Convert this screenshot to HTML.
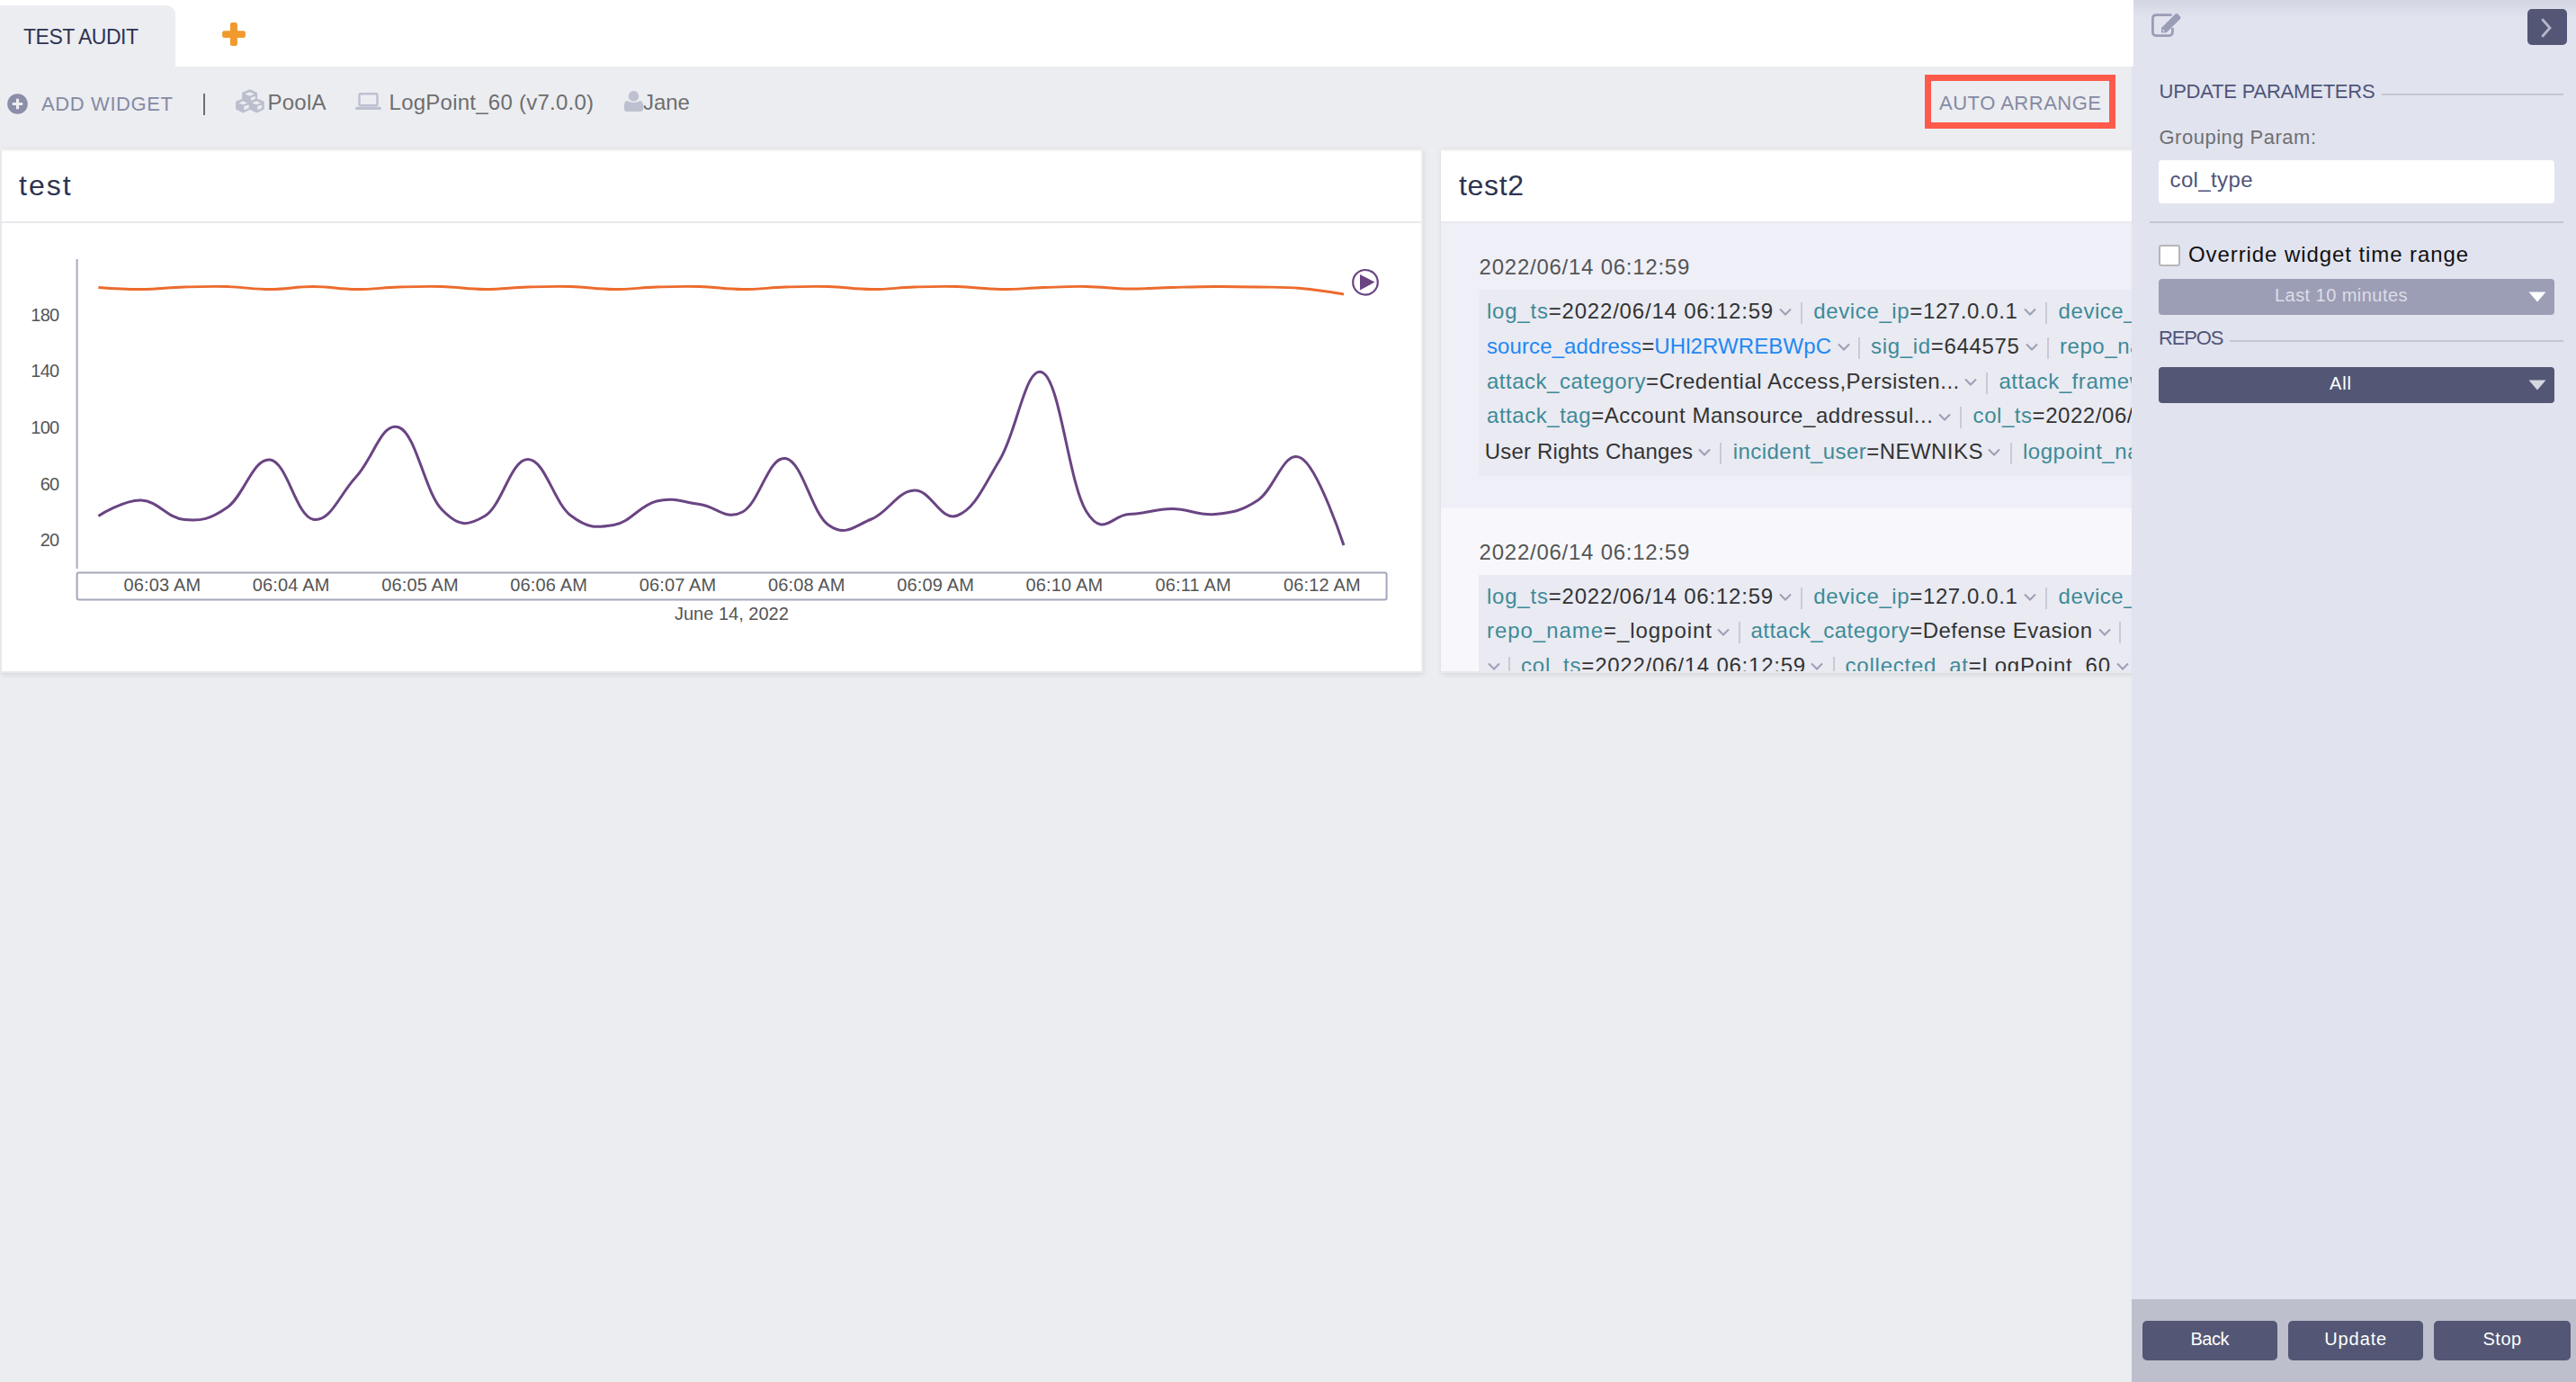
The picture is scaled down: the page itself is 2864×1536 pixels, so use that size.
<!DOCTYPE html>
<html><head><meta charset="utf-8"><title>Dashboard</title>
<style>
html,body{margin:0;padding:0}
body{width:2864px;height:1536px;overflow:hidden;position:relative;background:#ECEDF1;font-family:"Liberation Sans",sans-serif}
.r{position:absolute;box-sizing:content-box}
.t{position:absolute;white-space:nowrap}
</style></head><body>
<div class="r" style="left:0px;top:0px;width:2372px;height:74px;background:#ffffff;"></div>
<div class="r" style="left:0px;top:6px;width:195px;height:68px;background:#ECEDF1;border-top-right-radius:10px"></div>
<div class="t" style="left:26.0px;top:30.0px;font-size:23px;line-height:23px;color:#2E3350;letter-spacing:-0.50px;font-weight:normal;">TEST AUDIT</div>
<svg class="r" style="left:240px;top:18px" width="40" height="40" viewBox="240 18 40 40"><rect x="255.9" y="25.1" width="8" height="25.8" rx="2.2" fill="#F09A2D"/><rect x="247.1" y="34.3" width="25.8" height="7.6" rx="2.2" fill="#F09A2D"/></svg>
<svg class="r" style="left:8px;top:104px" width="23" height="23" viewBox="0 0 23 23"><circle cx="11.5" cy="11.5" r="11.3" fill="#8A8EA8"/><path d="M11.5 5.8 V17.2 M5.8 11.5 H17.2" stroke="#EDEEF2" stroke-width="3.2"/></svg>
<div class="t" style="left:46.0px;top:104.7px;font-size:22px;line-height:22px;color:#858AA3;letter-spacing:0.61px;font-weight:normal;">ADD WIDGET</div>
<div class="r" style="left:226px;top:104px;width:2px;height:24px;background:#6E6E73;"></div>
<svg class="r" style="left:258px;top:96px" width="40" height="34" viewBox="258 96 40 34">
<g fill="#BBBECC">
<path d="M269.1 102.9 L277.7 99.2 L286 102.9 L286 111 L277.7 114.5 L269.1 111 Z"/>
<path d="M262.1 112.7 L270.3 109.6 L278.6 112.7 L278.6 121.6 L270.3 125.6 L262.1 121.6 Z"/>
<path d="M277.3 112.7 L285.4 109.6 L293.7 112.7 L293.7 121.6 L285.4 125.6 L277.3 121.6 Z"/>
</g>
<g fill="#ECEDF1">
<path d="M272.3 104.6 L277.7 102.3 L282.8 104.6 L277.7 106.7 Z"/>
<path d="M278.9 108.4 L283.8 106.8 L283.8 109.9 L278.9 111.8 Z"/>
<path d="M265.4 114.5 L270.3 112.2 L275 114.5 L270.3 116.3 Z"/>
<path d="M271.3 118.1 L276.7 116.6 L276.7 120.1 L271.3 122.6 Z"/>
<path d="M280.1 114.5 L285.1 112.2 L290 114.5 L285.1 116.3 Z"/>
<path d="M286.3 118.1 L291.1 116.6 L291.1 120.1 L286.3 122.6 Z"/>
</g></svg>
<div class="t" style="left:297.5px;top:101.9px;font-size:24px;line-height:24px;color:#6E6E6E;letter-spacing:0.24px;font-weight:normal;">PoolA</div>
<svg class="r" style="left:395px;top:103px" width="29" height="20" viewBox="0 0 29 20">
<rect x="4.5" y="1.2" width="20" height="13" rx="1.5" fill="none" stroke="#BDC0CF" stroke-width="2.4"/>
<rect x="0" y="15.8" width="29" height="3.2" rx="1.6" fill="#BDC0CF"/></svg>
<div class="t" style="left:432.6px;top:101.9px;font-size:24px;line-height:24px;color:#6E6E6E;letter-spacing:0.24px;font-weight:normal;">LogPoint_60 (v7.0.0)</div>
<svg class="r" style="left:694px;top:101px" width="21" height="23" viewBox="0 0 21 23">
<circle cx="10.5" cy="5.8" r="5.8" fill="#BDC0CF"/>
<path d="M3 11 Q10.5 15 18 11 Q21 12 21 16 V20 Q21 23 18 23 H3 Q0 23 0 20 V16 Q0 12 3 11 Z" fill="#BDC0CF"/></svg>
<div class="t" style="left:715.0px;top:101.9px;font-size:24px;line-height:24px;color:#6E6E6E;letter-spacing:-0.08px;font-weight:normal;">Jane</div>
<div class="r" style="left:2140px;top:83px;width:198px;height:46px;border:7px solid #FE5A4B"></div>
<div class="t" style="left:2156.0px;top:104.4px;font-size:22px;line-height:22px;color:#858AA3;letter-spacing:0.51px;font-weight:normal;">AUTO ARRANGE</div>
<div class="r" style="left:0px;top:166px;width:1578px;height:578px;background:#fff;border-style:solid;border-width:2px;border-color:#F4F2F3 #EFEDED #EAE8E8 #E8E7EA;box-shadow:0 0 6px rgba(0,0,0,0.06),1px 3px 6px rgba(0,0,0,0.05)"></div>
<div class="r" style="left:2px;top:246px;width:1578px;height:2px;background:#E9E9EE;"></div>
<div class="t" style="left:21.0px;top:189.9px;font-size:32px;line-height:32px;color:#2E3350;letter-spacing:2.01px;font-weight:normal;">test</div>
<svg class="r" style="left:0;top:0" width="1600" height="760"><path d="M 109.4 319.5 C 109.4 319.5 138.0 321.6 157.1 321.5 C 176.2 321.4 185.8 319.6 204.9 319.0 C 224.0 318.4 233.5 318.0 252.6 318.5 C 271.7 319.0 281.3 321.5 300.4 321.5 C 319.5 321.5 329.0 318.5 348.1 318.5 C 367.2 318.5 376.8 321.4 395.9 321.5 C 415.0 321.6 424.5 319.6 443.6 319.0 C 462.7 318.4 472.3 318.0 491.4 318.5 C 510.5 319.0 520.0 321.4 539.1 321.5 C 558.2 321.6 567.8 319.6 586.8 319.0 C 605.9 318.4 615.5 318.0 634.6 318.5 C 653.7 319.0 663.2 321.4 682.3 321.5 C 701.4 321.6 711.0 319.6 730.1 319.0 C 749.2 318.4 758.7 318.0 777.8 318.5 C 796.9 319.0 806.5 321.4 825.6 321.5 C 844.7 321.6 854.2 319.6 873.3 319.0 C 892.4 318.4 902.0 318.0 921.1 318.5 C 940.2 319.0 949.7 321.4 968.8 321.5 C 987.9 321.6 997.5 319.6 1016.6 319.0 C 1035.6 318.4 1045.2 318.0 1064.3 318.5 C 1083.4 319.0 1092.9 321.3 1112.0 321.5 C 1131.1 321.7 1140.7 320.1 1159.8 319.5 C 1178.9 318.9 1188.4 318.2 1207.5 318.5 C 1226.6 318.8 1236.2 320.8 1255.3 321.0 C 1274.4 321.2 1283.9 320.0 1303.0 319.5 C 1322.1 319.0 1331.7 318.6 1350.8 318.5 C 1369.9 318.4 1379.4 318.6 1398.5 319.0 C 1417.6 319.4 1427.2 318.9 1446.3 320.5 C 1465.4 322.1 1494.0 327.0 1494.0 327.0" fill="none" stroke="#EC6B2D" stroke-width="2.8"/><path d="M 109.4 573.5 C 109.4 573.5 138.0 555.2 157.1 556.0 C 176.2 556.8 185.8 575.9 204.9 577.5 C 224.0 579.1 233.5 577.3 252.6 564.0 C 271.7 550.7 281.3 508.4 300.4 511.0 C 319.5 513.6 329.0 573.4 348.1 577.2 C 367.2 581.0 376.8 550.4 395.9 530.0 C 415.0 509.6 424.5 467.7 443.6 475.0 C 462.7 482.3 472.3 546.8 491.4 566.5 C 510.5 586.2 520.0 584.7 539.1 573.5 C 558.2 562.3 567.8 510.6 586.8 510.5 C 605.9 510.4 615.5 558.4 634.6 573.0 C 653.7 587.6 663.2 586.7 682.3 583.5 C 701.4 580.3 711.0 561.6 730.1 557.0 C 749.2 552.4 758.7 558.1 777.8 560.5 C 796.9 562.9 806.5 579.2 825.6 569.0 C 844.7 558.8 854.2 506.6 873.3 509.5 C 892.4 512.4 902.0 570.0 921.1 583.5 C 940.2 597.0 949.7 584.7 968.8 577.0 C 987.9 569.3 997.5 545.8 1016.6 545.0 C 1035.6 544.2 1045.2 580.0 1064.3 573.0 C 1083.4 566.0 1092.9 541.9 1112.0 510.2 C 1131.1 478.5 1140.7 402.9 1159.8 414.5 C 1178.9 426.1 1188.4 536.6 1207.5 568.0 C 1226.6 599.4 1236.2 572.0 1255.3 571.5 C 1274.4 571.0 1283.9 565.5 1303.0 565.5 C 1322.1 565.5 1331.7 573.4 1350.8 571.5 C 1369.9 569.6 1379.4 568.5 1398.5 556.0 C 1417.6 543.5 1427.2 499.0 1446.3 509.0 C 1465.4 519.0 1494.0 606.0 1494.0 606.0" fill="none" stroke="#6A4483" stroke-width="3"/><rect x="84.6" y="288" width="2" height="344" fill="#A8ABBE"/><rect x="85.6" y="636.6" width="1456" height="30" rx="2" fill="none" stroke="#A3A7BA" stroke-width="2"/><circle cx="1518" cy="313.8" r="13.8" fill="#fff" stroke="#6A4483" stroke-width="2.2"/><path d="M1512 305 L1528.5 313.6 L1512 322.5 Z" fill="#6A4483"/></svg>
<div class="t" style="left:0;width:65.5px;text-align:right;top:340.2px;font-size:20px;line-height:20px;color:#555;letter-spacing:-0.7px">180</div>
<div class="t" style="left:0;width:65.5px;text-align:right;top:402.4px;font-size:20px;line-height:20px;color:#555;letter-spacing:-0.7px">140</div>
<div class="t" style="left:0;width:65.5px;text-align:right;top:465.1px;font-size:20px;line-height:20px;color:#555;letter-spacing:-0.7px">100</div>
<div class="t" style="left:0;width:65.5px;text-align:right;top:527.7px;font-size:20px;line-height:20px;color:#555;letter-spacing:-0.7px">60</div>
<div class="t" style="left:0;width:65.5px;text-align:right;top:590.1px;font-size:20px;line-height:20px;color:#555;letter-spacing:-0.7px">20</div>
<div class="t" style="left:120.4px;width:120px;text-align:center;top:640.2px;font-size:20px;line-height:20px;color:#555;letter-spacing:0.15px">06:03 AM</div>
<div class="t" style="left:263.7px;width:120px;text-align:center;top:640.2px;font-size:20px;line-height:20px;color:#555;letter-spacing:0.15px">06:04 AM</div>
<div class="t" style="left:407.0px;width:120px;text-align:center;top:640.2px;font-size:20px;line-height:20px;color:#555;letter-spacing:0.15px">06:05 AM</div>
<div class="t" style="left:550.2px;width:120px;text-align:center;top:640.2px;font-size:20px;line-height:20px;color:#555;letter-spacing:0.15px">06:06 AM</div>
<div class="t" style="left:693.5px;width:120px;text-align:center;top:640.2px;font-size:20px;line-height:20px;color:#555;letter-spacing:0.15px">06:07 AM</div>
<div class="t" style="left:836.8px;width:120px;text-align:center;top:640.2px;font-size:20px;line-height:20px;color:#555;letter-spacing:0.15px">06:08 AM</div>
<div class="t" style="left:980.1px;width:120px;text-align:center;top:640.2px;font-size:20px;line-height:20px;color:#555;letter-spacing:0.15px">06:09 AM</div>
<div class="t" style="left:1123.4px;width:120px;text-align:center;top:640.2px;font-size:20px;line-height:20px;color:#555;letter-spacing:0.15px">06:10 AM</div>
<div class="t" style="left:1266.6px;width:120px;text-align:center;top:640.2px;font-size:20px;line-height:20px;color:#555;letter-spacing:0.15px">06:11 AM</div>
<div class="t" style="left:1409.9px;width:120px;text-align:center;top:640.2px;font-size:20px;line-height:20px;color:#555;letter-spacing:0.15px">06:12 AM</div>
<div class="t" style="left:733.4px;width:160px;text-align:center;top:671.6px;font-size:20px;line-height:20px;color:#555">June 14, 2022</div>
<div class="r" style="left:1602px;top:166px;width:772px;height:578px;background:#fff;border-style:solid;border-width:2px 2px 2px 0;border-color:#F4F2F3 #EFEDED #EAE8E8 #F2F1F4;box-shadow:0 0 6px rgba(0,0,0,0.06),1px 3px 6px rgba(0,0,0,0.05)"></div>
<div class="r" style="left:1602px;top:166px;width:770px;height:580px;overflow:hidden">
<div class="r" style="left:0px;top:2px;width:770px;height:78px;background:#ffffff;"></div>
<div class="r" style="left:0px;top:80px;width:770px;height:2px;background:#E9E9EE;"></div>
<div class="t" style="left:20.0px;top:23.9px;font-size:32px;line-height:32px;color:#2E3350;letter-spacing:0.66px;font-weight:normal;">test2</div>
<div class="r" style="left:0px;top:82px;width:770px;height:316.5px;background:#EFEFF7;"></div>
<div class="r" style="left:0px;top:398.5px;width:770px;height:181.5px;background:#F8F8FC;"></div>
<div class="t" style="left:42.6px;top:118.7px;font-size:24px;line-height:24px;color:#555;letter-spacing:0.75px;font-weight:normal;">2022/06/14 06:12:59</div>
<div class="r" style="left:42px;top:156px;width:728px;height:206.5px;background:#E9EAF2;"></div>
<div class="t" style="left:42.6px;top:435.5px;font-size:24px;line-height:24px;color:#555;letter-spacing:0.75px;font-weight:normal;">2022/06/14 06:12:59</div>
<div class="r" style="left:42px;top:473px;width:728px;height:107px;background:#E9EAF2;"></div>
<div class="t" style="left:50.9px;top:167.7px;font-size:24px;line-height:24px;letter-spacing:0.80px"><span style="color:#3E8A98">log_ts</span><span style="color:#333">=</span><span style="color:#333">2022/06/14 06:12:59</span></div>
<svg class="r" style="left:376.0px;top:176.0px" width="14" height="10" viewBox="0 0 14 10"><path d="M1 1.5 L7 7.5 L13 1.5" fill="none" stroke="#9C9EB4" stroke-width="2"/></svg>
<div class="r" style="left:400.0px;top:169.7px;width:2px;height:24px;background:#C9CAD5"></div>
<div class="t" style="left:414.3px;top:167.7px;font-size:24px;line-height:24px;letter-spacing:0.62px"><span style="color:#3E8A98">device_ip</span><span style="color:#333">=</span><span style="color:#333">127.0.0.1</span></div>
<svg class="r" style="left:648.0px;top:176.0px" width="14" height="10" viewBox="0 0 14 10"><path d="M1 1.5 L7 7.5 L13 1.5" fill="none" stroke="#9C9EB4" stroke-width="2"/></svg>
<div class="r" style="left:672.4px;top:169.7px;width:2px;height:24px;background:#C9CAD5"></div>
<div class="t" style="left:686.6px;top:167.7px;font-size:24px;line-height:24px;letter-spacing:0.55px"><span style="color:#3E8A98">device_name</span><span style="color:#333">=</span><span style="color:#333">localhost</span></div>
<div class="t" style="left:51.0px;top:207.0px;font-size:24px;line-height:24px;letter-spacing:0.10px"><span style="color:#1F88F3">source_address</span><span style="color:#333">=</span><span style="color:#1F88F3">UHl2RWREBWpC</span></div>
<svg class="r" style="left:441.0px;top:215.3px" width="14" height="10" viewBox="0 0 14 10"><path d="M1 1.5 L7 7.5 L13 1.5" fill="none" stroke="#9C9EB4" stroke-width="2"/></svg>
<div class="r" style="left:464.0px;top:209.0px;width:2px;height:24px;background:#C9CAD5"></div>
<div class="t" style="left:478.0px;top:207.0px;font-size:24px;line-height:24px;letter-spacing:0.67px"><span style="color:#3E8A98">sig_id</span><span style="color:#333">=</span><span style="color:#333">644575</span></div>
<svg class="r" style="left:650.0px;top:215.3px" width="14" height="10" viewBox="0 0 14 10"><path d="M1 1.5 L7 7.5 L13 1.5" fill="none" stroke="#9C9EB4" stroke-width="2"/></svg>
<div class="r" style="left:674.0px;top:209.0px;width:2px;height:24px;background:#C9CAD5"></div>
<div class="t" style="left:688.0px;top:207.0px;font-size:24px;line-height:24px;letter-spacing:0.55px"><span style="color:#3E8A98">repo_name</span><span style="color:#333">=</span><span style="color:#333">_logpoint</span></div>
<div class="t" style="left:51.0px;top:246.0px;font-size:24px;line-height:24px;letter-spacing:0.51px"><span style="color:#3E8A98">attack_category</span><span style="color:#333">=</span><span style="color:#333">Credential Access,Persisten...</span></div>
<svg class="r" style="left:582.0px;top:254.3px" width="14" height="10" viewBox="0 0 14 10"><path d="M1 1.5 L7 7.5 L13 1.5" fill="none" stroke="#9C9EB4" stroke-width="2"/></svg>
<div class="r" style="left:606.0px;top:248.0px;width:2px;height:24px;background:#C9CAD5"></div>
<div class="t" style="left:620.4px;top:246.0px;font-size:24px;line-height:24px;letter-spacing:0.55px"><span style="color:#3E8A98">attack_framework</span><span style="color:#333">=</span><span style="color:#333">MITRE</span></div>
<div class="t" style="left:51.0px;top:284.4px;font-size:24px;line-height:24px;letter-spacing:0.54px"><span style="color:#3E8A98">attack_tag</span><span style="color:#333">=</span><span style="color:#333">Account Mansource_addressul...</span></div>
<svg class="r" style="left:553.0px;top:292.7px" width="14" height="10" viewBox="0 0 14 10"><path d="M1 1.5 L7 7.5 L13 1.5" fill="none" stroke="#9C9EB4" stroke-width="2"/></svg>
<div class="r" style="left:577.4px;top:286.4px;width:2px;height:24px;background:#C9CAD5"></div>
<div class="t" style="left:591.6px;top:284.4px;font-size:24px;line-height:24px;letter-spacing:0.55px"><span style="color:#3E8A98">col_ts</span><span style="color:#333">=</span><span style="color:#333">2022/06/14 06:12:59</span></div>
<div class="t" style="left:48.7px;top:323.7px;font-size:24px;line-height:24px;letter-spacing:0.18px"><span style="color:#333">User Rights Changes</span></div>
<svg class="r" style="left:286.0px;top:332.0px" width="14" height="10" viewBox="0 0 14 10"><path d="M1 1.5 L7 7.5 L13 1.5" fill="none" stroke="#9C9EB4" stroke-width="2"/></svg>
<div class="r" style="left:310.0px;top:325.7px;width:2px;height:24px;background:#C9CAD5"></div>
<div class="t" style="left:324.8px;top:323.7px;font-size:24px;line-height:24px;letter-spacing:0.44px"><span style="color:#3E8A98">incident_user</span><span style="color:#333">=</span><span style="color:#333">NEWNIKS</span></div>
<svg class="r" style="left:608.0px;top:332.0px" width="14" height="10" viewBox="0 0 14 10"><path d="M1 1.5 L7 7.5 L13 1.5" fill="none" stroke="#9C9EB4" stroke-width="2"/></svg>
<div class="r" style="left:632.6px;top:325.7px;width:2px;height:24px;background:#C9CAD5"></div>
<div class="t" style="left:646.9px;top:323.7px;font-size:24px;line-height:24px;letter-spacing:0.55px"><span style="color:#3E8A98">logpoint_name</span><span style="color:#333">=</span><span style="color:#333">LogPoint_60</span></div>
<div class="t" style="left:50.9px;top:484.7px;font-size:24px;line-height:24px;letter-spacing:0.80px"><span style="color:#3E8A98">log_ts</span><span style="color:#333">=</span><span style="color:#333">2022/06/14 06:12:59</span></div>
<svg class="r" style="left:376.0px;top:493.0px" width="14" height="10" viewBox="0 0 14 10"><path d="M1 1.5 L7 7.5 L13 1.5" fill="none" stroke="#9C9EB4" stroke-width="2"/></svg>
<div class="r" style="left:400.0px;top:486.7px;width:2px;height:24px;background:#C9CAD5"></div>
<div class="t" style="left:414.3px;top:484.7px;font-size:24px;line-height:24px;letter-spacing:0.62px"><span style="color:#3E8A98">device_ip</span><span style="color:#333">=</span><span style="color:#333">127.0.0.1</span></div>
<svg class="r" style="left:648.0px;top:493.0px" width="14" height="10" viewBox="0 0 14 10"><path d="M1 1.5 L7 7.5 L13 1.5" fill="none" stroke="#9C9EB4" stroke-width="2"/></svg>
<div class="r" style="left:672.4px;top:486.7px;width:2px;height:24px;background:#C9CAD5"></div>
<div class="t" style="left:686.6px;top:484.7px;font-size:24px;line-height:24px;letter-spacing:0.55px"><span style="color:#3E8A98">device_name</span><span style="color:#333">=</span><span style="color:#333">localhost</span></div>
<div class="t" style="left:51.0px;top:523.3px;font-size:24px;line-height:24px;letter-spacing:0.95px"><span style="color:#3E8A98">repo_name</span><span style="color:#333">=</span><span style="color:#333">_logpoint</span></div>
<svg class="r" style="left:307.0px;top:531.6px" width="14" height="10" viewBox="0 0 14 10"><path d="M1 1.5 L7 7.5 L13 1.5" fill="none" stroke="#9C9EB4" stroke-width="2"/></svg>
<div class="r" style="left:330.5px;top:525.3px;width:2px;height:24px;background:#C9CAD5"></div>
<div class="t" style="left:344.4px;top:523.3px;font-size:24px;line-height:24px;letter-spacing:0.49px"><span style="color:#3E8A98">attack_category</span><span style="color:#333">=</span><span style="color:#333">Defense Evasion</span></div>
<svg class="r" style="left:731.0px;top:531.6px" width="14" height="10" viewBox="0 0 14 10"><path d="M1 1.5 L7 7.5 L13 1.5" fill="none" stroke="#9C9EB4" stroke-width="2"/></svg>
<div class="r" style="left:754.0px;top:525.3px;width:2px;height:24px;background:#C9CAD5"></div>
<svg class="r" style="left:52.0px;top:570.0px" width="14" height="10" viewBox="0 0 14 10"><path d="M1 1.5 L7 7.5 L13 1.5" fill="none" stroke="#9C9EB4" stroke-width="2"/></svg>
<div class="r" style="left:75.0px;top:563.7px;width:2px;height:24px;background:#C9CAD5"></div>
<div class="t" style="left:89.0px;top:561.7px;font-size:24px;line-height:24px;letter-spacing:0.77px"><span style="color:#3E8A98">col_ts</span><span style="color:#333">=</span><span style="color:#333">2022/06/14 06:12:59</span></div>
<svg class="r" style="left:411.0px;top:570.0px" width="14" height="10" viewBox="0 0 14 10"><path d="M1 1.5 L7 7.5 L13 1.5" fill="none" stroke="#9C9EB4" stroke-width="2"/></svg>
<div class="r" style="left:435.5px;top:563.7px;width:2px;height:24px;background:#C9CAD5"></div>
<div class="t" style="left:449.6px;top:561.7px;font-size:24px;line-height:24px;letter-spacing:0.76px"><span style="color:#3E8A98">collected_at</span><span style="color:#333">=</span><span style="color:#333">LogPoint_60</span></div>
<svg class="r" style="left:751.0px;top:570.0px" width="14" height="10" viewBox="0 0 14 10"><path d="M1 1.5 L7 7.5 L13 1.5" fill="none" stroke="#9C9EB4" stroke-width="2"/></svg>
</div>
<div class="r" style="left:2370px;top:0;width:494px;height:1536px;background:#E1E3EF"></div>
<div class="r" style="left:2370px;top:0;width:494px;height:20px;background:linear-gradient(#D3D5E2,#E1E3EF)"></div>
<svg class="r" style="left:2388px;top:10px" width="42" height="34" viewBox="2388 10 42 34">
<path d="M2414.5 16.7 H2397.4 Q2393.4 16.7 2393.4 20.7 V35.5 Q2393.4 39.5 2397.4 39.5 H2411.4 Q2415.4 39.5 2415.4 35.5 V31" fill="none" stroke="#9A9DB6" stroke-width="2.75"/>
<path d="M2403 31.1 L2418.6 15.6 Q2419.9 14.3 2421.2 15.6 L2423.9 18.3 Q2425.2 19.6 2423.9 20.9 L2408.7 36.3 L2403 36.3 Z" fill="#9A9DB6"/>
<path d="M2405 33.2 L2406.3 34.5 L2405 34.5 Z" fill="#E1E3EF" stroke="#E1E3EF" stroke-width="1"/>
</svg>
<div class="r" style="left:2810px;top:10px;width:44px;height:40px;background:#535775;border-radius:5px"></div>
<svg class="r" style="left:2824px;top:20px" width="16" height="22" viewBox="0 0 16 22"><path d="M3 2 L11 11 L3 20" fill="none" stroke="#B5B7C9" stroke-width="2.8" stroke-linecap="round"/></svg>
<div class="t" style="left:2400.5px;top:91.1px;font-size:22px;line-height:22px;color:#4F5579;letter-spacing:-0.22px;font-weight:normal;">UPDATE PARAMETERS</div>
<div class="r" style="left:2648px;top:104px;width:202px;height:2px;background:#C5C6CE;"></div>
<div class="t" style="left:2400.5px;top:142.4px;font-size:22px;line-height:22px;color:#6F6F6F;letter-spacing:0.50px;font-weight:normal;">Grouping Param:</div>
<div class="r" style="left:2400px;top:178px;width:440px;height:48px;background:#fff;border-radius:4px"></div>
<div class="t" style="left:2412.5px;top:187.7px;font-size:24px;line-height:24px;color:#4F5579;letter-spacing:0.38px;font-weight:normal;">col_type</div>
<div class="r" style="left:2390px;top:246px;width:460px;height:2px;background:#C5C6CE;"></div>
<div class="r" style="left:2400px;top:272px;width:20px;height:20px;background:#fff;border:2px solid #B6B6B8;border-radius:3px"></div>
<div class="t" style="left:2433.0px;top:271.1px;font-size:24px;line-height:24px;color:#111;letter-spacing:0.92px;font-weight:normal;">Override widget time range</div>
<div class="r" style="left:2400px;top:310px;width:440px;height:40px;background:#9C9EB6;border-radius:4px"></div>
<div class="t" style="left:2529.0px;top:318.1px;font-size:20px;line-height:20px;color:#DCDDE7;letter-spacing:0.45px;font-weight:normal;">Last 10 minutes</div>
<svg class="r" style="left:2811px;top:324px" width="20" height="12" viewBox="0 0 20 12"><path d="M0.5 0.5 H19.5 L10 11.5 Z" fill="#fff"/></svg>
<div class="t" style="left:2400.0px;top:364.6px;font-size:22px;line-height:22px;color:#4F5579;letter-spacing:-1.18px;font-weight:normal;">REPOS</div>
<div class="r" style="left:2479px;top:378px;width:371px;height:2px;background:#C5C6CE;"></div>
<div class="r" style="left:2400px;top:408px;width:440px;height:40px;background:#535775;border-radius:4px"></div>
<div class="t" style="left:2590.0px;top:416.1px;font-size:20px;line-height:20px;color:#fff;letter-spacing:0.89px;font-weight:normal;">All</div>
<svg class="r" style="left:2811px;top:422px" width="20" height="12" viewBox="0 0 20 12"><path d="M0.5 0.5 H19.5 L10 11.5 Z" fill="#D6D7E1"/></svg>
<div class="r" style="left:2370px;top:0px;width:2px;height:74px;background:#ffffff;"></div>
<div class="r" style="left:2370px;top:1444px;width:494px;height:92px;background:#BEBFCC;"></div>
<div class="r" style="left:2382px;top:1468px;width:150px;height:44px;background:#535775;border-radius:5px"></div>
<div class="t" style="left:2435.4px;top:1478.2px;font-size:20px;line-height:20px;color:#fff;letter-spacing:-0.46px;font-weight:normal;">Back</div>
<div class="r" style="left:2544px;top:1468px;width:150px;height:44px;background:#535775;border-radius:5px"></div>
<div class="t" style="left:2584.3px;top:1478.2px;font-size:20px;line-height:20px;color:#fff;letter-spacing:0.88px;font-weight:normal;">Update</div>
<div class="r" style="left:2706px;top:1468px;width:152px;height:44px;background:#535775;border-radius:5px"></div>
<div class="t" style="left:2760.4px;top:1478.2px;font-size:20px;line-height:20px;color:#fff;letter-spacing:0.55px;font-weight:normal;">Stop</div>
</body></html>
